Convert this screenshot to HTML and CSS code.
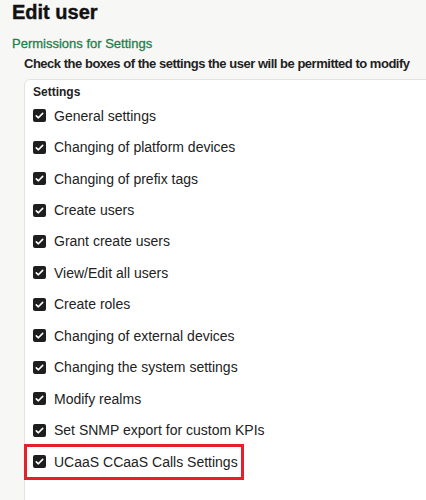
FILE: index.html
```html
<!DOCTYPE html>
<html>
<head>
<meta charset="utf-8">
<link rel="stylesheet" href="styles.css">
</head>
<body>
<div class="page">
  <h1 class="title">Edit user</h1>
  <h2 class="section">Permissions for Settings</h2>
  <p class="hint">Check the boxes of the settings the user will be permitted to modify</p>
  <div class="panel">
    <div class="panel-title">Settings</div>
    <ul class="list">
      <li class="row"><span class="cb"><svg viewBox="0 0 13 13"><path d="M3.3 6.8 L5.4 8.8 L9.7 4.4" /></svg></span>General settings</li>
      <li class="row"><span class="cb"><svg viewBox="0 0 13 13"><path d="M3.3 6.8 L5.4 8.8 L9.7 4.4" /></svg></span>Changing of platform devices</li>
      <li class="row"><span class="cb"><svg viewBox="0 0 13 13"><path d="M3.3 6.8 L5.4 8.8 L9.7 4.4" /></svg></span>Changing of prefix tags</li>
      <li class="row"><span class="cb"><svg viewBox="0 0 13 13"><path d="M3.3 6.8 L5.4 8.8 L9.7 4.4" /></svg></span>Create users</li>
      <li class="row"><span class="cb"><svg viewBox="0 0 13 13"><path d="M3.3 6.8 L5.4 8.8 L9.7 4.4" /></svg></span>Grant create users</li>
      <li class="row"><span class="cb"><svg viewBox="0 0 13 13"><path d="M3.3 6.8 L5.4 8.8 L9.7 4.4" /></svg></span>View/Edit all users</li>
      <li class="row"><span class="cb"><svg viewBox="0 0 13 13"><path d="M3.3 6.8 L5.4 8.8 L9.7 4.4" /></svg></span>Create roles</li>
      <li class="row"><span class="cb"><svg viewBox="0 0 13 13"><path d="M3.3 6.8 L5.4 8.8 L9.7 4.4" /></svg></span>Changing of external devices</li>
      <li class="row"><span class="cb"><svg viewBox="0 0 13 13"><path d="M3.3 6.8 L5.4 8.8 L9.7 4.4" /></svg></span>Changing the system settings</li>
      <li class="row"><span class="cb"><svg viewBox="0 0 13 13"><path d="M3.3 6.8 L5.4 8.8 L9.7 4.4" /></svg></span>Modify realms</li>
      <li class="row"><span class="cb"><svg viewBox="0 0 13 13"><path d="M3.3 6.8 L5.4 8.8 L9.7 4.4" /></svg></span>Set SNMP export for custom KPIs</li>
      <li class="row"><span class="highlight"><span class="cb"><svg viewBox="0 0 13 13"><path d="M3.3 6.8 L5.4 8.8 L9.7 4.4" /></svg></span>UCaaS CCaaS Calls Settings</span></li>
    </ul>
  </div>
</div>
</body>
</html>
```

FILE: styles.css
```css
html, body {
  margin: 0;
  padding: 0;
  background: #f7f7f6;
  font-family: "Liberation Sans", Arial, sans-serif;
  color: #222;
}
.page {
  width: 426px;
  height: 500px;
  overflow: hidden;
}
.title {
  margin: 0;
  padding: 0 0 0 12px;
  font-size: 20px;
  font-weight: bold;
  line-height: 24px;
  color: #111;
  -webkit-text-stroke: 0.4px #111;
}
.section {
  margin: 0;
  padding: 11px 0 0 12px;
  font-size: 13px;
  font-weight: normal;
  line-height: 17px;
  color: #1f7f4b;
  -webkit-text-stroke: 0.3px #1f7f4b;
}
.hint {
  margin: 0;
  padding: 3px 0 0 24px;
  font-size: 13px;
  font-weight: bold;
  line-height: 17px;
  letter-spacing: -0.48px;
  color: #222;
  white-space: nowrap;
}
.panel {
  margin: 7px 0 0 24px;
  width: 460px;
  height: 430px;
  background: #fff;
  border: 1px solid #e3e3e3;
  border-radius: 6px 0 0 0;
  padding: 5px 0 0 8px;
  box-sizing: border-box;
}
.panel-title {
  font-size: 12px;
  font-weight: bold;
  line-height: 15px;
  color: #222;
}
.list {
  list-style: none;
  margin: 0;
  padding: 0;
}
.row {
  height: 31.45px;
  display: flex;
  align-items: center;
  font-size: 14px;
  color: #222;
}
.cb {
  width: 13px;
  height: 13px;
  border-radius: 2px;
  background: #1e1e1e;
  margin-right: 8px;
  display: inline-flex;
  flex: none;
}
.cb svg {
  width: 13px;
  height: 13px;
}
.cb path {
  fill: none;
  stroke: #fff;
  stroke-width: 1.6;
  stroke-linecap: round;
  stroke-linejoin: round;
}
.highlight {
  display: inline-flex;
  align-items: center;
  margin-left: -6px;
  padding: 0 3px 0 6px;
  height: 30px;
  outline: 3px solid #e6202b;
  outline-offset: 0;
}
```
